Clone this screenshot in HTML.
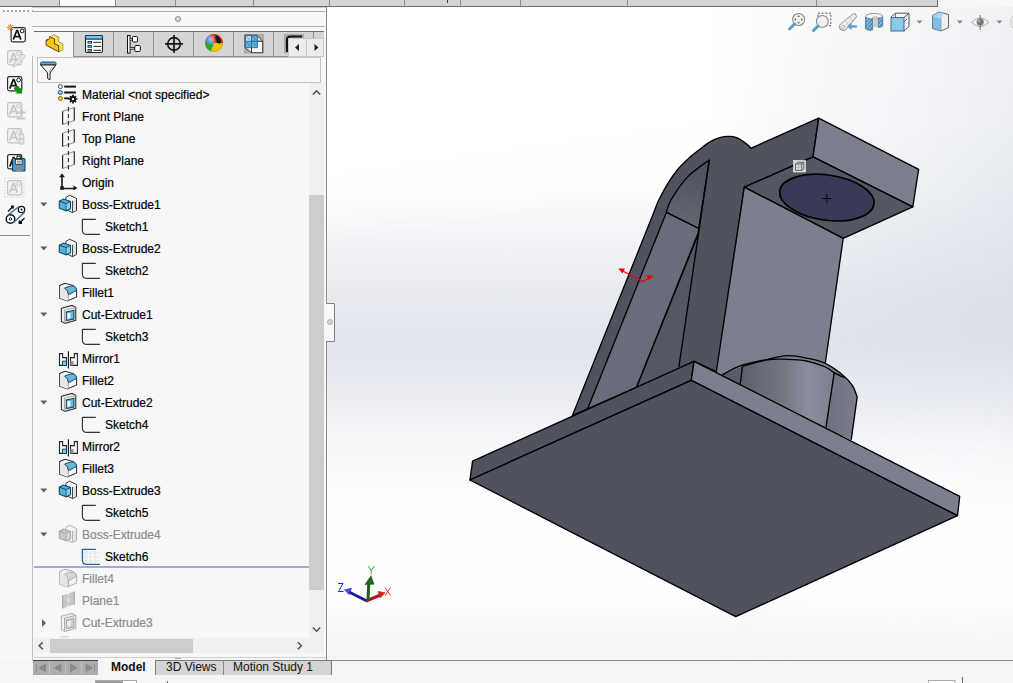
<!DOCTYPE html>
<html><head><meta charset="utf-8">
<style>
*{margin:0;padding:0;box-sizing:border-box}
html,body{width:1013px;height:683px;overflow:hidden;font-family:"Liberation Sans",sans-serif;font-size:12px;color:#111}
body{position:relative;background:#f7f7f7}
.abs{position:absolute}
#vp{position:absolute;left:327px;top:7px;width:686px;height:653px;background:linear-gradient(172deg,#fff 0px,#fff 165px,rgba(255,255,255,0) 235px),linear-gradient(#ffffff 0px,#fdfdfe 185px,#f2f3f6 232px,#e9ebf0 283px,#e3e6ed 328px,#e3e6ed 348px,#eceef3 395px,#f6f7f9 432px,#ffffff 495px,#fefefe 590px,#f4f5f7 653px)}
#vp2{position:absolute;left:327px;top:7px;width:686px;height:653px;background:linear-gradient(#f0f1f4 0px,#eceef2 120px,#e3e6ed 220px,#dcdfe8 300px,#dde0e9 338px,#e9ebf1 400px,#f8f9fb 452px,#ffffff 520px,#fefefe 590px,#f4f5f7 653px);-webkit-mask-image:linear-gradient(to right,transparent 0%,transparent 55%,#000 100%);mask-image:linear-gradient(to right,transparent 0%,transparent 55%,#000 100%)}
#topbar{position:absolute;left:0;top:0;width:938px;height:7px;background:#d4d4d4;border-bottom:1px solid #6a6a6a;border-right:1px solid #6a6a6a}
.tdiv{position:absolute;top:0;width:1px;height:6px;background:#8a8a8a}
#cmd{position:absolute;left:0;top:7px;width:33px;height:653px;background:#f7f7f7}
#panel{position:absolute;left:33px;top:7px;width:294px;height:653px;background:#f7f7f7;border-right:1px solid #8a8a8a}
.row{position:absolute;height:22px;line-height:22px;white-space:nowrap;color:#000;-webkit-text-stroke:0.2px #000}
.t1{left:82px}
.t2{left:105px}
.row.gray{color:#8c8c8c;-webkit-text-stroke:0.2px #8c8c8c}
.tri{position:absolute;left:40px;width:0;height:0;border-left:3.5px solid transparent;border-right:3.5px solid transparent;border-top:4px solid #5a5a5a}
.trir{position:absolute;left:42px;width:0;height:0;border-top:4px solid transparent;border-bottom:4px solid transparent;border-left:4px solid #5a5a5a}
</style></head><body>
<div id="vp"></div><div id="vp2"></div>
<!--MODEL-->
<svg class="abs" style="left:0;top:0" width="1013" height="683" viewBox="0 0 1013 683">
<defs>
<linearGradient id="cyl" x1="740" y1="0" x2="835" y2="0" gradientUnits="userSpaceOnUse">
<stop offset="0" stop-color="#5c5f6b"/><stop offset="0.45" stop-color="#737683"/><stop offset="0.72" stop-color="#8b8e9c"/><stop offset="1" stop-color="#7c7f8d"/></linearGradient>
<linearGradient id="cylr" x1="826" y1="0" x2="857" y2="0" gradientUnits="userSpaceOnUse">
<stop offset="0" stop-color="#6d7080"/><stop offset="1" stop-color="#7a7e8c"/></linearGradient>
<linearGradient id="archin" x1="690" y1="170" x2="680" y2="225" gradientUnits="userSpaceOnUse">
<stop offset="0" stop-color="#51545f"/><stop offset="1" stop-color="#646773"/></linearGradient>
</defs>
<g stroke="#000" stroke-width="1.35" stroke-linejoin="round">
<path fill="#50535f" d="M572.4,415.6 L652.8,215  C655.1,209.2 656.3,205.2 658.8,200.0 C661.3,194.8 664.4,189.1 667.6,183.9 C670.8,178.7 674.5,173.4 678.1,169.0 C681.8,164.6 686.0,160.8 689.5,157.6 C693.0,154.4 695.8,152.3 699.2,149.7 C702.6,147.1 706.6,143.8 710.0,141.8 C713.4,139.8 716.6,138.5 719.7,137.6 C722.8,136.7 725.5,136.4 728.4,136.4 C731.3,136.4 733.9,136.4 737.1,137.8 C740.3,139.2 745.1,142.8 747.4,144.6 C749.7,146.3 749.9,147.3 750.7,148.3 L818.7,118.2 L813,156.9 L744.3,187.2 L717,371.8 L694,361.3 Z"/>
<path fill="url(#archin)" d="M666.4,212.4 C667.2,210.3 667.5,205.9 671.0,200.0 C674.5,194.1 681.0,183.8 687.4,177.1 C693.8,170.4 705.6,162.8 709.3,160.0 L698.7,228.5 Z"/>
<path fill="#696c7a" d="M587.6,408.9 L666.4,212.4 L698.7,228.5 L698.2,232.9 L636.6,387.3 Z"/>
<path fill="#545764" stroke="none" d="M698.2,232.9 L636.6,387.3 L694,361.3 L678.9,367 Z"/>
<path fill="none" d="M698.7,232.9 L636.6,387.3"/>
<path fill="none" d="M709.3,160 L678.9,367"/>
<path fill="#7b7f8e" d="M818.7,118.2 L918.6,169.4 L912.8,206.8 L813,156.9 Z"/>
<path fill="#535663" d="M744.3,187.2 L813,156.9 L912.8,206.8 L843.2,238.4 Z"/>
<path fill="#7b7f8e" d="M744.3,187.2 L843.2,238.4 L820,400 L712,400 Z"/>
<ellipse cx="826.8" cy="197.6" rx="47.6" ry="22.6" transform="rotate(8 826.8 197.6)" fill="#393a58" stroke-width="1.7"/>
<path fill="none" stroke-width="0.9" d="M822.3,198.5 L831.3,198.5 M826.8,194 L826.8,203"/>
<!-- cylinder -->
<path fill="#7b7f8e" stroke="none" d="M722.0,375.0 C725.0,373.5 732.5,368.4 740.0,365.8 C747.5,363.2 759.4,361.0 767.3,359.3 C775.2,357.6 780.9,355.9 787.4,355.7 C793.9,355.5 800.1,356.8 806.4,358.1 C812.7,359.4 819.0,360.3 825.3,363.4 C831.6,366.4 839.8,372.6 844.3,376.4 C848.8,380.1 850.5,382.5 852.6,385.9 C854.8,389.3 856.4,395.0 857.2,396.8 L851.2,439.8 L700,380 Z"/>
<path fill="url(#cyl)" stroke="none" d="M742.4,366.3 C746.5,365.2 759.8,361.0 767.3,359.8 C774.8,358.6 780.9,359.1 787.4,359.3 C793.9,359.5 800.1,359.7 806.4,361.0 C812.7,362.3 820.7,365.1 825.3,367.0 C829.9,368.9 831.0,370.8 834.2,372.6 C837.4,374.4 842.6,376.9 844.3,377.8 L834.2,372.6 L826,427.2 L740.2,384.2 Z"/>
<path fill="url(#cylr)" stroke="none" d="M834.2,372.6 L844.3,377.8 L852.6,385.9 L857.2,396.8 L851.2,439.8 L826,427.2 Z"/>
<path fill="#5a5d69" stroke="none" d="M722,375 L742.4,366.3 L740.2,384.2 L716,375 Z"/>
<path fill="none" d="M742.4,366.3 C746.5,365.2 759.8,361.0 767.3,359.8 C774.8,358.6 780.9,359.1 787.4,359.3 C793.9,359.5 800.1,359.7 806.4,361.0 C812.7,362.3 820.7,365.1 825.3,367.0 C829.9,368.9 831.0,370.8 834.2,372.6 C837.4,374.4 842.6,376.9 844.3,377.8"/>
<path fill="none" d="M722.0,375.0 C725.0,373.5 732.5,368.4 740.0,365.8 C747.5,363.2 759.4,361.0 767.3,359.3 C775.2,357.6 780.9,355.9 787.4,355.7 C793.9,355.5 800.1,356.8 806.4,358.1 C812.7,359.4 819.0,360.3 825.3,363.4 C831.6,366.4 839.8,372.6 844.3,376.4 C848.8,380.1 850.5,382.5 852.6,385.9 C854.8,389.3 856.4,395.0 857.2,396.8 L851.2,439.8"/>
<path fill="none" d="M742.4,366.3 L740.2,384.2 M834.2,372.6 L826,427.2"/>
<!-- base plate -->
<path fill="#50535f" d="M472.6,461.2 L694,361.3 L691.3,380.4 L469.9,480 Z"/>
<path fill="#7b7f8e" d="M694,361.3 L959.7,496.3 L957.5,515.7 L691.3,380.4 Z"/>
<path fill="#50535f" d="M469.9,480 L691.3,380.4 L957.5,515.7 L735.7,616.6 Z"/>
</g>
<g stroke="#e00" stroke-width="1.2" fill="#e00">
<path fill="none" d="M621,270 L642.7,281.6 L650,277.5"/>
<path stroke="none" d="M618.2,268.5 L625,268.5 L622.5,273.5 Z"/>
<path stroke="none" d="M653.5,276 L646.5,275 L648.8,280.5 Z"/>
</g>
</svg>
<!--/MODEL-->
<div id="topbar">
  <div class="abs" style="left:59px;top:0;width:57px;height:6px;background:#fafafa"></div>
  <div class="tdiv" style="left:59px"></div>
  <div class="tdiv" style="left:115px"></div>
  <div class="tdiv" style="left:175px"></div>
  <div class="tdiv" style="left:253px"></div>
  <div class="tdiv" style="left:329px"></div>
  <div class="tdiv" style="left:404px"></div>
  <div class="tdiv" style="left:460px"></div>
  <div class="tdiv" style="left:520px"></div>
  <div class="tdiv" style="left:627px"></div>
  <div class="tdiv" style="left:816px"></div>
  <div class="abs" style="left:447px;top:0;width:1px;height:3px;background:#7a1a2a"></div>
</div>
<div id="cmd"></div>

<div id="panel"></div>
<!-- panel top -->
<div class="abs" style="left:0;top:7px;width:32px;height:5px;background:#fff"></div>
<div class="abs" style="left:32px;top:7px;width:294px;height:1px;background:#bcd0d2"></div>
<div class="abs" style="left:3px;top:10px;width:28px;height:2px;background:repeating-linear-gradient(90deg,#8a8a8a 0 2px,transparent 2px 4px);opacity:0.75"></div>
<div class="abs" style="left:32px;top:11px;width:293px;height:1px;background:#aaa"></div>
<div class="abs" style="left:32px;top:10px;width:1px;height:2px;background:#aaa"></div>
<div class="abs" style="left:175px;top:16px;width:6px;height:6px;border-radius:50%;background:#ddd;border:1px solid #8a8a8a"></div>
<div class="abs" style="left:32px;top:26px;width:293px;height:1px;background:#b0b0b0"></div>
<!-- tab strip -->
<div class="abs" style="left:34px;top:31px;width:290px;height:1px;background:#6e6e6e"></div>
<div class="abs" style="left:73px;top:32px;width:251px;height:24px;background:#d4d4d4"></div>
<div class="abs" style="left:73px;top:32px;width:1px;height:24px;background:#8e8e8e"></div>
<div class="abs" style="left:113px;top:32px;width:1px;height:24px;background:#8e8e8e"></div>
<div class="abs" style="left:153px;top:32px;width:1px;height:24px;background:#8e8e8e"></div>
<div class="abs" style="left:193px;top:32px;width:1px;height:24px;background:#8e8e8e"></div>
<div class="abs" style="left:233px;top:32px;width:1px;height:24px;background:#8e8e8e"></div>
<div class="abs" style="left:273px;top:32px;width:1px;height:24px;background:#8e8e8e"></div>
<div class="abs" style="left:313px;top:32px;width:1px;height:24px;background:#8e8e8e"></div>
<div class="abs" style="left:73px;top:56px;width:251px;height:1px;background:#8e8e8e"></div>
<div class="abs" style="left:288px;top:38px;width:36px;height:19px;background:#ececec;border:1px solid #c4c4c4;border-bottom:none"></div>
<div class="abs" style="left:306px;top:39px;width:1px;height:18px;background:#c4c4c4"></div>
<div class="abs" style="left:295px;top:43px;width:0;height:0;border-top:4px solid transparent;border-bottom:4px solid transparent;border-right:4px solid #222"></div>
<div class="abs" style="left:314px;top:43px;width:0;height:0;border-top:4px solid transparent;border-bottom:4px solid transparent;border-left:4px solid #222"></div>
<!-- tree frame -->
<div class="abs" style="left:32px;top:56px;width:1px;height:604px;background:#bdbdbd"></div>
<div class="abs" style="left:0;top:235px;width:30px;height:1px;background:#8e8e8e"></div>
<div class="abs" style="left:37px;top:57px;width:284px;height:26px;border:1px solid #c4c4c4;background:#f7f7f7"></div>
<!-- vertical scrollbar -->
<div class="abs" style="left:309px;top:83px;width:15px;height:555px;background:#f0f0f0"></div>
<div class="abs" style="left:309px;top:195px;width:15px;height:395px;background:#cdcdcd"></div>
<!-- horizontal scrollbar -->
<div class="abs" style="left:34px;top:638px;width:290px;height:15px;background:#f0f0f0"></div>
<div class="abs" style="left:50px;top:639px;width:143px;height:14px;background:#cdcdcd"></div>
<div class="abs" style="left:34px;top:657px;width:292px;height:1px;background:#cfcfcf"></div>
<div class="abs" style="left:175px;top:658px;width:6px;height:1px;background:#aaa"></div>
<!-- bottom tabs -->
<div class="abs" style="left:327px;top:660px;width:686px;height:1px;background:#8a8a8a"></div>
<div class="abs" style="left:0;top:661px;width:1013px;height:22px;background:#f5f5f5"></div>
<div class="abs" style="left:33px;top:660px;width:65px;height:15px;background:#a9a9a9;border-top:1px solid #444"></div>
<div class="abs" style="left:155px;top:660px;width:177px;height:15px;background:#d4d4d4;border-left:1px solid #7a7a7a;border-right:1px solid #7a7a7a;border-top:1px solid #7a7a7a"></div>
<div class="abs" style="left:223px;top:660px;width:1px;height:15px;background:#8a8a8a"></div>
<div class="abs" style="left:111px;top:659px;font-weight:bold;line-height:16px">Model</div>
<div class="abs" style="left:166px;top:659px;line-height:16px">3D Views</div>
<div class="abs" style="left:233px;top:659px;line-height:16px">Motion Study 1</div>


<!-- tree -->
<div id="tree">
  <div class="row t1" style="top:84px">Material &lt;not specified&gt;</div>
  <div class="row t1" style="top:106px">Front Plane</div>
  <div class="row t1" style="top:128px">Top Plane</div>
  <div class="row t1" style="top:150px">Right Plane</div>
  <div class="row t1" style="top:172px">Origin</div>
  <div class="row t1" style="top:194px">Boss-Extrude1</div>
  <div class="row t2" style="top:216px">Sketch1</div>
  <div class="row t1" style="top:238px">Boss-Extrude2</div>
  <div class="row t2" style="top:260px">Sketch2</div>
  <div class="row t1" style="top:282px">Fillet1</div>
  <div class="row t1" style="top:304px">Cut-Extrude1</div>
  <div class="row t2" style="top:326px">Sketch3</div>
  <div class="row t1" style="top:348px">Mirror1</div>
  <div class="row t1" style="top:370px">Fillet2</div>
  <div class="row t1" style="top:392px">Cut-Extrude2</div>
  <div class="row t2" style="top:414px">Sketch4</div>
  <div class="row t1" style="top:436px">Mirror2</div>
  <div class="row t1" style="top:458px">Fillet3</div>
  <div class="row t1" style="top:480px">Boss-Extrude3</div>
  <div class="row t2" style="top:502px">Sketch5</div>
  <div class="row t1 gray" style="top:524px">Boss-Extrude4</div>
  <div class="row t2" style="top:546px">Sketch6</div>
  <div class="abs" style="left:34px;top:566px;width:275px;height:2px;background:#aaa6cc"></div>
  <div class="row t1 gray" style="top:568px">Fillet4</div>
  <div class="row t1 gray" style="top:590px">Plane1</div>
  <div class="row t1 gray" style="top:612px">Cut-Extrude3</div>
</div>
<!--TREEICONS-->
<svg class="abs" style="left:0;top:0" width="1013" height="683">
<g transform="translate(54,84)">
<circle cx="6.4" cy="2.6" r="2" fill="#f4f4f4" stroke="#555" stroke-width="1"/>
<rect x="10.2" y="1.6" width="11.7" height="2" fill="#151515"/>
<circle cx="6.4" cy="8.5" r="2" fill="#8fd0f0" stroke="#1d5f85" stroke-width="1"/>
<rect x="10.2" y="7.5" width="11.7" height="2" fill="#151515"/>
<circle cx="6.4" cy="14.5" r="2" fill="#f5cc10" stroke="#8a6a10" stroke-width="1"/>
<rect x="10.2" y="13.4" width="5" height="1.9" fill="#151515"/>
<g transform="translate(19,15.1)"><circle r="3" fill="#151515"/>
<path d="M-0.9,-4.3h1.8v8.6h-1.8z M-4.3,-0.9v1.8h8.6v-1.8z" fill="#151515"/>
<path d="M-0.9,-4.3h1.8v8.6h-1.8z M-4.3,-0.9v1.8h8.6v-1.8z" fill="#151515" transform="rotate(45)"/>
<rect x="-1" y="-1" width="2" height="2" fill="#fff"/></g>
</g>
<g transform="translate(54,106)">
<path d="M8.6,5.3 L20.3,1.5 L20.3,14.5 L8.6,18.4 Z" fill="#f8f8f8"/>
<path d="M8.6,5.3 L20.3,1.5 M8.6,18.4 L20.3,14.5" stroke="#9a9a9a" stroke-width="1.1" fill="none"/>
<path d="M8.6,5.2 V18.6 M20.3,1.4 V14.6" stroke="#2a2a2a" stroke-width="1.2" fill="none"/>
<path d="M14.4,1 V19.4" stroke="#2a2a2a" stroke-width="1.1" stroke-dasharray="4.2,2.8" fill="none"/>
</g>
<g transform="translate(54,128)">
<path d="M8.6,5.3 L20.3,1.5 L20.3,14.5 L8.6,18.4 Z" fill="#f8f8f8"/>
<path d="M8.6,5.3 L20.3,1.5 M8.6,18.4 L20.3,14.5" stroke="#9a9a9a" stroke-width="1.1" fill="none"/>
<path d="M8.6,5.2 V18.6 M20.3,1.4 V14.6" stroke="#2a2a2a" stroke-width="1.2" fill="none"/>
<path d="M14.4,1 V19.4" stroke="#2a2a2a" stroke-width="1.1" stroke-dasharray="4.2,2.8" fill="none"/>
</g>
<g transform="translate(54,150)">
<path d="M8.6,5.3 L20.3,1.5 L20.3,14.5 L8.6,18.4 Z" fill="#f8f8f8"/>
<path d="M8.6,5.3 L20.3,1.5 M8.6,18.4 L20.3,14.5" stroke="#9a9a9a" stroke-width="1.1" fill="none"/>
<path d="M8.6,5.2 V18.6 M20.3,1.4 V14.6" stroke="#2a2a2a" stroke-width="1.2" fill="none"/>
<path d="M14.4,1 V19.4" stroke="#2a2a2a" stroke-width="1.1" stroke-dasharray="4.2,2.8" fill="none"/>
</g>
<g transform="translate(54,172)">
<path d="M8,4 V16.5 H20.5" stroke="#1a1a1a" stroke-width="1.6" fill="none"/>
<path d="M5.1,5.2 L8,1.2 L10.9,5.2 Z M19.6,13.4 L23.4,15.9 L19.6,18.4 Z" fill="#1a1a1a"/>
<rect x="6.2" y="14.2" width="3.6" height="3.6" fill="#1a1a1a"/>
</g>
<g transform="translate(54,194)">
<path d="M11.8,3.5 L15.5,1.2 L22.5,4.5 L22.5,16.5 L18.5,18.6 L12,15.5 Z" fill="#fafafa" stroke="#333" stroke-width="1"/>
<path d="M18.5,6.8 V18.4" stroke="#333" stroke-width="0.9"/>
<path d="M19,7 L22,5.2 V16 L19,17.8 Z" fill="#e0e0e0"/>
<path d="M5.3,7.2 L9.5,5 L16.5,7.5 L16.5,14.6 L12.2,16.8 L5.3,14.2 Z" fill="#5cb0d8" stroke="#0f4a6a" stroke-width="1.1"/>
<path d="M5.3,7.2 L12.2,9.6 L16.5,7.5 M12.2,9.6 V16.8" stroke="#0f4a6a" stroke-width="1" fill="none"/>
<path d="M12.6,10 L16,8.2 V14.3 L12.6,16 Z" fill="#88cdee"/>
</g>
<g transform="translate(78,216)">
<path d="M4.4,3.4 H17.8 M4.4,3 V14.5 Q4.6,18.4 9,18.4 H21.9" stroke="#333" stroke-width="1.15" fill="none"/>
</g>
<g transform="translate(54,238)">
<path d="M11.8,3.5 L15.5,1.2 L22.5,4.5 L22.5,16.5 L18.5,18.6 L12,15.5 Z" fill="#fafafa" stroke="#333" stroke-width="1"/>
<path d="M18.5,6.8 V18.4" stroke="#333" stroke-width="0.9"/>
<path d="M19,7 L22,5.2 V16 L19,17.8 Z" fill="#e0e0e0"/>
<path d="M5.3,7.2 L9.5,5 L16.5,7.5 L16.5,14.6 L12.2,16.8 L5.3,14.2 Z" fill="#5cb0d8" stroke="#0f4a6a" stroke-width="1.1"/>
<path d="M5.3,7.2 L12.2,9.6 L16.5,7.5 M12.2,9.6 V16.8" stroke="#0f4a6a" stroke-width="1" fill="none"/>
<path d="M12.6,10 L16,8.2 V14.3 L12.6,16 Z" fill="#88cdee"/>
</g>
<g transform="translate(78,260)">
<path d="M4.4,3.4 H17.8 M4.4,3 V14.5 Q4.6,18.4 9,18.4 H21.9" stroke="#333" stroke-width="1.15" fill="none"/>
</g>
<g transform="translate(54,282)">
<path d="M5.6,3.6 L11,1.3 L17.5,3 Q21.5,4.5 22.6,8 L22.6,15 L13.5,19 L5.6,16 Z" fill="#f4f4f4" stroke="#333" stroke-width="1.1"/>
<path d="M5.9,4 L13.5,6.8 Q14.6,9 14.8,13 L13.5,19 L5.9,16 Z" fill="#e8e8e8"/>
<path d="M10.6,6 Q15.5,3.8 19.8,3.9 Q22.5,5.5 22.6,8.3 L14.5,12.8 Q14.2,8.5 10.6,6 Z" fill="#6ab8df" stroke="#0f4a6a" stroke-width="1"/>
<path d="M14.3,12.8 V18.8" stroke="#999" stroke-width="0.9"/>
</g>
<g transform="translate(54,304)">
<path d="M7.4,4.3 L18,1.4 L21.8,3.6 L21.8,16.4 L11,19.4 L7.4,17.4 Z" fill="#f0f0f0" stroke="#333" stroke-width="1.1"/>
<path d="M10.5,6 L21.5,3.6 M10.5,6 V19.2" stroke="#a0a0a0" stroke-width="0.9" fill="none"/>
<rect x="12.3" y="7.6" width="7.6" height="8.6" fill="#69b8e0" stroke="#0f4a6a" stroke-width="1.1" transform="skewY(-12) translate(0,3)"/>
<rect x="13.4" y="9.4" width="3" height="5.3" fill="#fff" transform="skewY(-12) translate(0,3)"/>
</g>
<g transform="translate(78,326)">
<path d="M4.4,3.4 H17.8 M4.4,3 V14.5 Q4.6,18.4 9,18.4 H21.9" stroke="#333" stroke-width="1.15" fill="none"/>
</g>
<g transform="translate(54,348)">
<path d="M5.5,5.6 H8.6 V9.6 H12.4 V17.4 H5.5 Z" fill="#f6f6f6" stroke="#222" stroke-width="1.1"/>
<rect x="8.5" y="13.2" width="4" height="4.3" fill="#7cc6ea" stroke="#0f4a6a" stroke-width="1"/>
<path d="M23.4,5.6 H20.3 V9.6 H16.5 V17.4 H23.4 Z" fill="#f6f6f6" stroke="#222" stroke-width="1.1"/>
<rect x="16.4" y="13.2" width="3.2" height="4.3" fill="#909090"/>
<path d="M14.4,3.2 V20.6" stroke="#111" stroke-width="1.1"/>
</g>
<g transform="translate(54,370)">
<path d="M5.6,3.6 L11,1.3 L17.5,3 Q21.5,4.5 22.6,8 L22.6,15 L13.5,19 L5.6,16 Z" fill="#f4f4f4" stroke="#333" stroke-width="1.1"/>
<path d="M5.9,4 L13.5,6.8 Q14.6,9 14.8,13 L13.5,19 L5.9,16 Z" fill="#e8e8e8"/>
<path d="M10.6,6 Q15.5,3.8 19.8,3.9 Q22.5,5.5 22.6,8.3 L14.5,12.8 Q14.2,8.5 10.6,6 Z" fill="#6ab8df" stroke="#0f4a6a" stroke-width="1"/>
<path d="M14.3,12.8 V18.8" stroke="#999" stroke-width="0.9"/>
</g>
<g transform="translate(54,392)">
<path d="M7.4,4.3 L18,1.4 L21.8,3.6 L21.8,16.4 L11,19.4 L7.4,17.4 Z" fill="#f0f0f0" stroke="#333" stroke-width="1.1"/>
<path d="M10.5,6 L21.5,3.6 M10.5,6 V19.2" stroke="#a0a0a0" stroke-width="0.9" fill="none"/>
<rect x="12.3" y="7.6" width="7.6" height="8.6" fill="#69b8e0" stroke="#0f4a6a" stroke-width="1.1" transform="skewY(-12) translate(0,3)"/>
<rect x="13.4" y="9.4" width="3" height="5.3" fill="#fff" transform="skewY(-12) translate(0,3)"/>
</g>
<g transform="translate(78,414)">
<path d="M4.4,3.4 H17.8 M4.4,3 V14.5 Q4.6,18.4 9,18.4 H21.9" stroke="#333" stroke-width="1.15" fill="none"/>
</g>
<g transform="translate(54,436)">
<path d="M5.5,5.6 H8.6 V9.6 H12.4 V17.4 H5.5 Z" fill="#f6f6f6" stroke="#222" stroke-width="1.1"/>
<rect x="8.5" y="13.2" width="4" height="4.3" fill="#7cc6ea" stroke="#0f4a6a" stroke-width="1"/>
<path d="M23.4,5.6 H20.3 V9.6 H16.5 V17.4 H23.4 Z" fill="#f6f6f6" stroke="#222" stroke-width="1.1"/>
<rect x="16.4" y="13.2" width="3.2" height="4.3" fill="#909090"/>
<path d="M14.4,3.2 V20.6" stroke="#111" stroke-width="1.1"/>
</g>
<g transform="translate(54,458)">
<path d="M5.6,3.6 L11,1.3 L17.5,3 Q21.5,4.5 22.6,8 L22.6,15 L13.5,19 L5.6,16 Z" fill="#f4f4f4" stroke="#333" stroke-width="1.1"/>
<path d="M5.9,4 L13.5,6.8 Q14.6,9 14.8,13 L13.5,19 L5.9,16 Z" fill="#e8e8e8"/>
<path d="M10.6,6 Q15.5,3.8 19.8,3.9 Q22.5,5.5 22.6,8.3 L14.5,12.8 Q14.2,8.5 10.6,6 Z" fill="#6ab8df" stroke="#0f4a6a" stroke-width="1"/>
<path d="M14.3,12.8 V18.8" stroke="#999" stroke-width="0.9"/>
</g>
<g transform="translate(54,480)">
<path d="M11.8,3.5 L15.5,1.2 L22.5,4.5 L22.5,16.5 L18.5,18.6 L12,15.5 Z" fill="#fafafa" stroke="#333" stroke-width="1"/>
<path d="M18.5,6.8 V18.4" stroke="#333" stroke-width="0.9"/>
<path d="M19,7 L22,5.2 V16 L19,17.8 Z" fill="#e0e0e0"/>
<path d="M5.3,7.2 L9.5,5 L16.5,7.5 L16.5,14.6 L12.2,16.8 L5.3,14.2 Z" fill="#5cb0d8" stroke="#0f4a6a" stroke-width="1.1"/>
<path d="M5.3,7.2 L12.2,9.6 L16.5,7.5 M12.2,9.6 V16.8" stroke="#0f4a6a" stroke-width="1" fill="none"/>
<path d="M12.6,10 L16,8.2 V14.3 L12.6,16 Z" fill="#88cdee"/>
</g>
<g transform="translate(78,502)">
<path d="M4.4,3.4 H17.8 M4.4,3 V14.5 Q4.6,18.4 9,18.4 H21.9" stroke="#333" stroke-width="1.15" fill="none"/>
</g>
<g transform="translate(54,524)">
<path d="M11.8,3.5 L15.5,1.2 L22.5,4.5 L22.5,16.5 L18.5,18.6 L12,15.5 Z" fill="#f4f4f4" stroke="#b0b0b0" stroke-width="1"/>
<path d="M18.5,6.8 V18.4" stroke="#b0b0b0" stroke-width="0.9"/>
<path d="M19,7 L22,5.2 V16 L19,17.8 Z" fill="#e4e4e4"/>
<path d="M5.3,7.2 L9.5,5 L16.5,7.5 L16.5,14.6 L12.2,16.8 L5.3,14.2 Z" fill="#c8c8c8" stroke="#a8a8a8" stroke-width="1.1"/>
<path d="M5.3,7.2 L12.2,9.6 L16.5,7.5 M12.2,9.6 V16.8" stroke="#a8a8a8" stroke-width="1" fill="none"/>
<path d="M12.6,10 L16,8.2 V14.3 L12.6,16 Z" fill="#d8d8d8"/>
</g>
<g transform="translate(78,546)">
<path d="M8,3 V19 M12.5,3 V19 M17,3 V19 M4,7 H22 M4,11 H22 M4,15 H22" stroke="#e2e2e2" stroke-width="0.8" fill="none"/>
<path d="M4.4,3.4 H17.8 M4.4,3 V14.5 Q4.6,18.4 9,18.4 H21.9" stroke="#1d6a96" stroke-width="1.3" fill="none"/>
</g>
<g transform="translate(54,568)">
<path d="M5.6,3.6 L11,1.3 L17.5,3 Q21.5,4.5 22.6,8 L22.6,15 L13.5,19 L5.6,16 Z" fill="#f2f2f2" stroke="#b4b4b4" stroke-width="1.1"/>
<path d="M5.9,4 L13.5,6.8 Q14.6,9 14.8,13 L13.5,19 L5.9,16 Z" fill="#e6e6e6"/>
<path d="M10.6,6 Q15.5,3.8 19.8,3.9 Q22.5,5.5 22.6,8.3 L14.5,12.8 Q14.2,8.5 10.6,6 Z" fill="#d6d6d6" stroke="#b0b0b0" stroke-width="1"/>
<path d="M14.3,12.8 V18.8" stroke="#999" stroke-width="0.9"/>
</g>
<g transform="translate(54,590)">
<path d="M8.6,5.3 L20.3,1.5 L20.3,14.5 L8.6,18.4 Z" fill="#c8c8c8"/>
<path d="M8.6,5.2 V18.6 M20.3,1.4 V14.6" stroke="#a8a8a8" stroke-width="1.2" fill="none"/>
<path d="M14.4,1 V19.4" stroke="#f0f0f0" stroke-width="1.1" stroke-dasharray="4.2,2.8" fill="none"/>
</g>
<g transform="translate(54,612)">
<path d="M7.4,4.3 L18,1.4 L21.8,3.6 L21.8,16.4 L11,19.4 L7.4,17.4 Z" fill="#f0f0f0" stroke="#b4b4b4" stroke-width="1.1"/>
<path d="M10.5,6 L21.5,3.6 M10.5,6 V19.2" stroke="#a0a0a0" stroke-width="0.9" fill="none"/>
<rect x="12.3" y="7.6" width="7.6" height="8.6" fill="#d0d0d0" stroke="#a8a8a8" stroke-width="1.1" transform="skewY(-12) translate(0,3)"/>
<rect x="13.4" y="9.4" width="3" height="5.3" fill="#eee" transform="skewY(-12) translate(0,3)"/>
</g>
<path d="M40.3,202.6 h7 l-3.5,3.8 z" fill="#606060"/>
<path d="M40.3,246.6 h7 l-3.5,3.8 z" fill="#606060"/>
<path d="M40.3,312.6 h7 l-3.5,3.8 z" fill="#606060"/>
<path d="M40.3,400.6 h7 l-3.5,3.8 z" fill="#606060"/>
<path d="M40.3,488.6 h7 l-3.5,3.8 z" fill="#606060"/>
<path d="M40.3,532.6 h7 l-3.5,3.8 z" fill="#606060"/>
<path d="M42,619 v8 l4,-4 z" fill="#606060"/>
<path d="M60,637.5 l1.5,-1.5 l1.5,1.5 l1.5,-1.5 l1.5,1.5 l1.5,-1.5 l1.5,1.5" stroke="#b8b8b8" stroke-width="0.8" fill="none"/>
</svg>
<!--/TREEICONS-->
<!--ICONS2-->
<svg class="abs" style="left:0;top:0" width="1013" height="683">
<g transform="translate(40,30)" stroke="#4a3600" stroke-width="0.9" stroke-linejoin="round">
<path d="M6.1,10.2 L9.8,8.6 L9.8,6.8 L13.9,5.1 L18.6,7.2 L18.6,12 L22.7,13.8 L22.7,19.5 L18.6,21.8 L6.1,15.2 Z" fill="#f5c518"/>
<path d="M9.8,6.8 L13.9,5.1 L18.6,7.2 L14.5,9 Z" fill="#fde27a" stroke="none"/>
<path d="M14.5,9 L18.6,7.2 L18.6,12 L14.5,13.8 Z" fill="#f9dc5a" stroke="none"/>
<path d="M14.5,13.8 L18.6,12 L22.7,13.8 L18.6,15.6 Z" fill="#fde27a" stroke="none"/>
<path d="M18.6,15.6 L22.7,13.8 L22.7,19.5 L18.6,21.8 Z" fill="#f9dc5a" stroke="none"/>
<path d="M9.8,6.8 L14.5,9 V13.8 L18.6,15.6 V21.8 M6.1,10.2 L7.6,10.8" fill="none"/>
</g>
<g transform="translate(85.5,35.5)">
<rect x="0" y="0" width="17" height="17" rx="1.5" fill="#fff" stroke="#222" stroke-width="1.1"/>
<rect x="0" y="0" width="17" height="3.6" rx="1" fill="#7cc4e8" stroke="#0d3f5e" stroke-width="1.1"/>
<rect x="2" y="5.5" width="4.5" height="2.6" fill="#0d3f5e"/><rect x="3" y="6.4" width="2.5" height="0.9" fill="#8cc8ea"/>
<rect x="2" y="9.6" width="4.5" height="2.6" fill="#0d3f5e"/><rect x="3" y="10.5" width="2.5" height="0.9" fill="#8cc8ea"/>
<rect x="2" y="13.5" width="4.5" height="2.6" fill="#0d3f5e"/><rect x="3" y="14.4" width="2.5" height="0.9" fill="#8cc8ea"/>
<path d="M8,6.8 H15.5 M8,10.9 H15.5 M8,14.8 H15.5" stroke="#222" stroke-width="1"/>
</g>
<g transform="translate(127,35)" stroke="#111" stroke-width="1">
<rect x="0.5" y="0.5" width="2.6" height="17.6" fill="#fff"/>
<path d="M3,4.3 H6 M3,13.3 H8" stroke-width="2.4" stroke="#111"/><path d="M3,4.3 H6 M3,13.3 H8" stroke-width="0.8" stroke="#fff"/>
<rect x="5.5" y="1.5" width="5" height="5.5" rx="1" fill="#fff"/>
<rect x="7.8" y="10.5" width="5.5" height="6" rx="1" fill="#fff"/>
</g>
<g transform="translate(174,43.9)" stroke="#161616" fill="none">
<circle r="6.3" stroke-width="1.6"/><path d="M0,-9 V9 M-9,0 H9" stroke-width="1.7"/></g>
<defs><radialGradient id="ballhl" cx="0.35" cy="0.3" r="0.7"><stop offset="0" stop-color="#fff" stop-opacity="0.6"/><stop offset="0.5" stop-color="#fff" stop-opacity="0"/></radialGradient></defs>
<g transform="translate(214,42.9)">
<circle r="8.8" fill="#d8c020"/>
<path d="M0,0 L-8.8,0 A8.8,8.8 0 0 1 -3.5,-8.1 Q-4,-3 0,0 Z" fill="#3a7ad8"/>
<path d="M0,0 Q-4,-3 -3.5,-8.1 A8.8,8.8 0 0 1 8.8,0 Z" fill="#e02020"/>
<path d="M0,0 L-8.8,0 A8.8,8.8 0 0 0 -3,8.3 Z" fill="#20b020"/>
<path d="M0,0 L-3,8.3 A8.8,8.8 0 0 0 8.8,0 Z" fill="#f0c800"/>
<ellipse cx="3.8" cy="-3.3" rx="2.3" ry="4.5" transform="rotate(-35 3.8 -3.3)" fill="#151515"/>
<circle r="8.8" fill="url(#ballhl)"/>
<circle r="8.6" fill="none" stroke="#7a6a20" stroke-width="0.5" stroke-opacity="0.6"/>
</g>
<rect x="244" y="34" width="20" height="19.5" fill="#a9a9a9"/>
<g stroke-linejoin="round">
<path d="M245,35.2 H256.9 L262.6,41.3 H251.5 Z" fill="#eeeeee" stroke="#333" stroke-width="0.9"/>
<path d="M245,35.2 L251.5,41.3 V52.7 L245,47.5 Z" fill="#f2f2f2" stroke="#333" stroke-width="0.9"/>
<rect x="251.5" y="41.3" width="11.1" height="11.4" fill="#f8f8f8" stroke="#333" stroke-width="0.9"/>
<rect x="245.4" y="35.6" width="12" height="12.1" fill="#56a8d8" fill-opacity="0.9"/>
<rect x="245.4" y="35.6" width="6.1" height="5.7" fill="#cfdbe2"/>
<path d="M245.4,35.6 H257.4 V47.7 H245.4 Z M245.4,41.3 H257.4 M251.5,35.6 V47.7" fill="none" stroke="#1a6a9a" stroke-width="0.9"/>
<path d="M246.8,37 L250.2,40 M252.8,36.8 L256.2,40 M246.8,42.6 L250.2,46.4 M252.8,42.6 L256.2,46.4" stroke="#1a6a9a" stroke-width="0.6"/>
</g>
<rect x="284" y="34" width="20" height="19.5" fill="#a9a9a9"/>
<path d="M287,52 V40 Q287,36.5 290.5,36.5 H302" stroke="#111" stroke-width="2.2" fill="none"/>
<rect x="288.5" y="38.5" width="35" height="18" fill="#ececec" stroke="#c8c8c8"/>
<path d="M306.5,39 V56.5" stroke="#c8c8c8"/>
<path d="M295,47.5 l4,-3.6 v7.2 z M318.5,47.5 l-4,-3.6 v7.2 z" fill="#222"/>
<g transform="translate(40,61)">
<path d="M0.5,2.5 Q0.5,1 2,1 H14.5 Q16,1 16,2.5 V4 H0.5 Z" fill="#5aaedc" stroke="#0d3f5e" stroke-width="0.9"/>
<path d="M0.8,4 H15.8 L10,12 V18.8 L7.6,17.5 V12 Z" fill="#f0f0f0" stroke="#222" stroke-width="1"/>
<path d="M12,6 L9,11" stroke="#aaa" stroke-width="1"/>
</g>
<path d="M312.8,94.5 L316.5,90.8 L320.2,94.5" stroke="#555" stroke-width="1.6" fill="none"/>
<path d="M312.8,627.5 L316.5,631.2 L320.2,627.5" stroke="#555" stroke-width="1.6" fill="none"/>
<path d="M42.8,642.3 L39.2,645.8 L42.8,649.3" stroke="#555" stroke-width="1.6" fill="none"/>
<path d="M297.8,642.3 L301.4,645.8 L297.8,649.3" stroke="#555" stroke-width="1.6" fill="none"/>
<rect x="11.1" y="27.6" width="14.2" height="14.2" rx="1.8" fill="#fff" stroke="#2a2a2a" stroke-width="1.2"/>
<path d="M13.3,39.6 L16.7,30.6 H17.5 L20.9,39.6 M14.9,36.6 H19.3" stroke="#151515" stroke-width="1.7" fill="none"/>
<circle cx="22.1" cy="31" r="1.9" fill="none" stroke="#151515" stroke-width="1"/>
<g transform="translate(10.4,27.4)" stroke="#b84000" stroke-width="0.9"><path d="M-3.2,0H3.2M0,-3.2V3.2M-2.3,-2.3L2.3,2.3M-2.3,2.3L2.3,-2.3"/><circle r="1.4" fill="#f8c820" stroke="none"/></g>
<rect x="7.6" y="50.6" width="14.2" height="14.2" rx="1.8" fill="#f2f2f2" stroke="#c4c4c4" stroke-width="1.2"/>
<path d="M9.8,62.6 L13.2,53.6 H14 L17.4,62.6 M11.4,59.6 H15.8" stroke="#c8c8c8" stroke-width="1.7" fill="none"/>
<circle cx="18.6" cy="54" r="1.9" fill="none" stroke="#c8c8c8" stroke-width="1"/>
<path d="M13,67 L15,62 L23,54 L25.5,56.5 L17.5,64.5 Z" fill="#e8e8e8" stroke="#c0c0c0" stroke-width="0.9"/>
<rect x="7.6" y="76.6" width="14.2" height="14.2" rx="1.8" fill="#fff" stroke="#2a2a2a" stroke-width="1.2"/>
<path d="M9.8,88.6 L13.2,79.6 H14 L17.4,88.6 M11.4,85.6 H15.8" stroke="#151515" stroke-width="1.7" fill="none"/>
<circle cx="18.6" cy="80" r="1.9" fill="none" stroke="#151515" stroke-width="1"/>
<path d="M17,85 L20.5,88.5 L22.2,86.8 L22.2,93.6 L15.4,93.6 L17.1,91.9 L13.6,88.4 Z" fill="#1a8a10"/>
<rect x="7.6" y="102.6" width="14.2" height="14.2" rx="1.8" fill="#f2f2f2" stroke="#c4c4c4" stroke-width="1.2"/>
<path d="M9.8,114.6 L13.2,105.6 H14 L17.4,114.6 M11.4,111.6 H15.8" stroke="#c8c8c8" stroke-width="1.7" fill="none"/>
<circle cx="18.6" cy="106" r="1.9" fill="none" stroke="#c8c8c8" stroke-width="1"/>
<path d="M17.5,112.5 H25.5 M21.5,108.5 V116.5 M16.5,118.5 H25.5" stroke="#c8c8c8" stroke-width="2.2"/>
<rect x="7.6" y="128.6" width="14.2" height="14.2" rx="1.8" fill="#f2f2f2" stroke="#c4c4c4" stroke-width="1.2"/>
<path d="M9.8,140.6 L13.2,131.6 H14 L17.4,140.6 M11.4,137.6 H15.8" stroke="#c8c8c8" stroke-width="1.7" fill="none"/>
<circle cx="18.6" cy="132" r="1.9" fill="none" stroke="#c8c8c8" stroke-width="1"/>
<rect x="18.5" y="133" width="6" height="12" rx="3" fill="#d0d0d0"/><circle cx="21.5" cy="136.5" r="1.3" fill="#f4f4f4"/><circle cx="21.5" cy="141.5" r="1.3" fill="#f4f4f4"/>
<rect x="7.6" y="154.6" width="14.2" height="14.2" rx="1.8" fill="#fff" stroke="#2a2a2a" stroke-width="1.2"/>
<path d="M9.8,166.6 L13.2,157.6 H14 L17.4,166.6 M11.4,163.6 H15.8" stroke="#151515" stroke-width="1.7" fill="none"/>
<circle cx="18.6" cy="158" r="1.9" fill="none" stroke="#151515" stroke-width="1"/>
<path d="M12.5,158.5 H24 Q25,158.5 25,159.5 V171 H12.5 Z" fill="#4a9ad0" stroke="#0d3f5e" stroke-width="1"/>
<rect x="15.5" y="159.5" width="6.5" height="5" fill="#f4f4f4" stroke="#222" stroke-width="0.7"/>
<path d="M16.8,161.2H20.8M16.8,163H20.8" stroke="#333" stroke-width="0.6"/>
<rect x="16" y="166.5" width="6" height="4.5" fill="#888"/>
<path d="M17,156.5 Q17,154.5 18.8,154.5 Q20.6,154.5 20.6,156.5 V159" fill="none" stroke="#222" stroke-width="0.9"/>
<rect x="7.6" y="180.6" width="14.2" height="14.2" rx="1.8" fill="#f2f2f2" stroke="#c4c4c4" stroke-width="1.2"/>
<path d="M9.8,192.6 L13.2,183.6 H14 L17.4,192.6 M11.4,189.6 H15.8" stroke="#c8c8c8" stroke-width="1.7" fill="none"/>
<circle cx="18.6" cy="184" r="1.9" fill="none" stroke="#c8c8c8" stroke-width="1"/>
<rect x="5" y="178" width="19" height="19" fill="none" stroke="#d4d4d4" stroke-width="1" stroke-dasharray="1.5,1.5"/>
<g stroke="#111" fill="none">
<circle cx="10.5" cy="219" r="4.3" stroke-width="1.4"/><circle cx="10.5" cy="219" r="1.2" stroke-width="0.9"/>
<circle cx="21.5" cy="209.5" r="3.2" stroke-width="1.3"/><circle cx="21.5" cy="209.5" r="0.6" fill="#111"/>
<path d="M7.5,215.5 L19,206.5 M13.5,222.5 L24.5,212.5" stroke="#2a78b0" stroke-width="1.5"/>
<path d="M8,211.5 L12.5,207" stroke-width="1.2"/><path d="M11,206.5 H13 V208.5" stroke-width="1.8"/>
<path d="M24.5,218 L20,222.5" stroke-width="1.2"/><path d="M19.5,220.5 V223 H22" stroke-width="1.8"/>
</g>
<g>
<circle cx="798.6" cy="19.5" r="6" fill="#eef2f5" stroke="#8a8a8a" stroke-width="1.1"/>
<path d="M798.6,15.2 l-1.5,1.6 h3 z M798.6,23.8 l-1.5,-1.6 h3 z M794.3,19.5 l1.6,-1.5 v3 z M802.9,19.5 l-1.6,-1.5 v3 z" fill="#555"/>
<path d="M794.5,24 L789.5,29" stroke="#5a9fc8" stroke-width="3" stroke-linecap="round"/>
<rect x="818" y="13.2" width="12.8" height="12.4" fill="none" stroke="#555" stroke-width="1" stroke-dasharray="2,1.6"/>
<circle cx="822.3" cy="21.4" r="5.9" fill="#eef2f5" stroke="#8a8a8a" stroke-width="1.1"/>
<path d="M818,26 L813.5,30.5" stroke="#5a9fc8" stroke-width="3" stroke-linecap="round"/>
<defs><linearGradient id="tel" x1="0" y1="0" x2="1" y2="1"><stop offset="0" stop-color="#ffffff"/><stop offset="1" stop-color="#d8d8d8"/></linearGradient>
<pattern id="hatch" width="2.6" height="2.6" patternUnits="userSpaceOnUse" patternTransform="rotate(40)"><rect width="2.6" height="2.6" fill="#3f86b4"/><rect width="1.1" height="2.6" fill="#9fd4ef"/></pattern></defs>
<path d="M840.3,24.2 L853.6,13.5 Q855.6,12.6 856.6,16.7 L845.9,29.8 Q842.5,32 840,29 Q838.3,26.5 840.3,24.2 Z" fill="url(#tel)" stroke="#8a8a8a" stroke-width="0.9"/>
<path d="M845,20.6 L849.8,26 M849.4,17 L853.2,21.4" stroke="#b8b8b8" stroke-width="0.7" fill="none"/>
<ellipse cx="842.6" cy="27.4" rx="2.2" ry="1.5" transform="rotate(-45 842.6 27.4)" fill="none" stroke="#9a9a9a" stroke-width="0.7"/>
<path d="M856.8,26.5 H850.5" stroke="#5a9fc8" stroke-width="2.4"/>
<path d="M847.2,26.5 L851.5,22.8 V30.2 Z" fill="#5a9fc8"/>
<path d="M865.4,17 Q866,13.5 874.1,13.4 Q882.2,13.5 882.8,16.5 V26 Q882.6,27.5 878.2,27.3 V17.5 Q876,16.6 872.5,17.5 V30 Q866.8,30.6 865.4,28.8 Z" fill="#f4f4f4" stroke="#8a8a8a" stroke-width="0.9"/>
<path d="M872.8,17.6 Q875.5,16.6 878,17.6 V27.2 Q875.5,26.4 872.8,28 Z" fill="#cdcdcd"/>
<path d="M865.8,17.4 Q868.5,18.6 872.3,18.9 V29.8 Q867.5,30.2 865.8,28.6 Z" fill="url(#hatch)" stroke="#2d6d95" stroke-width="0.6"/>
<path d="M878.4,18.2 Q881.5,17.5 882.5,16.7 V25.8 Q881.5,26.9 878.4,27 Z" fill="url(#hatch)" stroke="#2d6d95" stroke-width="0.6"/>
<path d="M891,17 L895.5,13.2 H909 V26.5 L904,31 M904,17.5 L909,13.2" fill="none" stroke="#555" stroke-width="1"/>
<path d="M895.5,13.2 V17.5 M904,22 l3,-3" stroke="#555" stroke-width="0.8"/>
<rect x="891" y="17.5" width="13" height="13.5" fill="#8cc8e8" stroke="#3a6e90" stroke-width="1"/>
<path d="M916.5,20.5 h6 l-3,3.2 z" fill="#8a8a8a"/>
<path d="M932.5,15.5 L939,12 L948.5,14.5 V27.5 L941,31 L932.5,28.5 Z" fill="#f0f0f0" stroke="#666" stroke-width="1"/>
<path d="M932.8,15.8 L941,18.5 V30.8 L932.8,28.3 Z" fill="#7cc0e4"/>
<path d="M933,15.5 L939.5,12.5 L943.5,13.5 L941,18.5 Z" fill="#a8d8f0"/>
<path d="M941,18.5 V31" stroke="#7a9cb0" stroke-width="0.8"/>
<path d="M956.8,20.6 h6 l-3,3.2 z" fill="#8a8a8a"/>
<path d="M971.5,22.3 Q980,13.5 988.8,22.3 Q980,31 971.5,22.3 Z" fill="#f4f4f4" stroke="#aaa" stroke-width="1"/>
<circle cx="980.2" cy="22" r="3.6" fill="#7a7a7a"/><circle cx="979.3" cy="20.8" r="1.3" fill="#c4c4c4"/>
<path d="M980.2,15 V29.8" stroke="#666" stroke-width="0.9"/>
<path d="M996.3,20.6 h6 l-3,3.2 z" fill="#8a8a8a"/>
<circle cx="1019" cy="22" r="8.5" fill="#e8e8e8" stroke="#ccc"/>
</g>
<g>
<path d="M367,601 L348,591.5" stroke="#1a1aa8" stroke-width="3"/>
<path d="M344.5,589.8 L351.5,588.2 L349,594.5 Z" fill="#4848f0" stroke="#2a2ad0" stroke-width="0.6"/>
<path d="M366,601 L380.5,595" stroke="#a81818" stroke-width="3"/>
<path d="M385,592.8 L378,591.5 L380.5,597.8 Z" fill="#d82020" stroke="#b01818" stroke-width="0.6"/>
<path d="M368,600 L368.8,583" stroke="#1a601a" stroke-width="3"/>
<path d="M365,584.5 L371,575.8 L374,584.2 Z" fill="#206a20" stroke="#185818" stroke-width="0.6"/>
<path d="M368,566 L371.2,570.2 L374.5,566 M371.2,570.2 V574.5" stroke="#10a010" stroke-width="0.9" fill="none"/>
<path d="M338.2,583.5 H343 L338.5,591.5 H343.5" stroke="#1a1aff" stroke-width="1" fill="none"/>
<path d="M385,587.5 L390.5,595.5 M390.5,587.5 L385,595.5" stroke="#ff2020" stroke-width="0.9" fill="none"/>
</g>
<path d="M326.5,303.5 H334.5 V341.5 H326.5" fill="#f8f8f8" stroke="#808080" stroke-width="1"/>
<rect x="326" y="304" width="1.2" height="37" fill="#f8f8f8"/>
<circle cx="330" cy="322" r="2.4" fill="#d8d8d8" stroke="#999" stroke-width="0.8"/>
<g>
<rect x="33" y="660.5" width="65" height="14" fill="#acacac"/>
<path d="M33,660.5 H98" stroke="#404040" stroke-width="1.2"/>
<path d="M49.5,661 V674 M65.5,661 V674 M81.5,661 V674" stroke="#c4c4c4" stroke-width="1"/>
<path d="M36.5,664 V671.5 M45.5,664 L39,667.8 L45.5,671.5 Z M61,664 L54.5,667.8 L61,671.5 Z M70.5,664 L77,667.8 L70.5,671.5 Z M86,664 L92.5,667.8 L86,671.5 Z M94.5,664 V671.5" fill="#8a8a8a" stroke="#8a8a8a" stroke-width="1"/>
</g>
<rect x="95.5" y="680.5" width="41" height="6" fill="#fff" stroke="#aaa" stroke-width="1"/><rect x="96" y="681" width="27" height="5" fill="#999"/><path d="M167.5,681 V683" stroke="#666"/>
<rect x="928.5" y="680.5" width="26.5" height="6" fill="#fff" stroke="#aaa" stroke-width="1"/><path d="M962.5,677 V683" stroke="#666"/>
<rect x="793.5" y="160.5" width="12" height="11.5" fill="#dcdce0" stroke="#f0f0f2" stroke-width="0.6"/>
<g stroke="#444" stroke-width="0.8" fill="none"><path d="M795.5,164 L797.5,162.3 H803.8 V169 L801.8,170.5 H795.5 Z M795.5,164 H801.8 V170.5 M801.8,164 L803.8,162.3"/>
<path d="M798.5,164 V170.5 M795.5,167.3 H801.8" stroke="#999" stroke-width="0.5"/></g>
</svg>
<!--/ICONS2-->
</body></html>
